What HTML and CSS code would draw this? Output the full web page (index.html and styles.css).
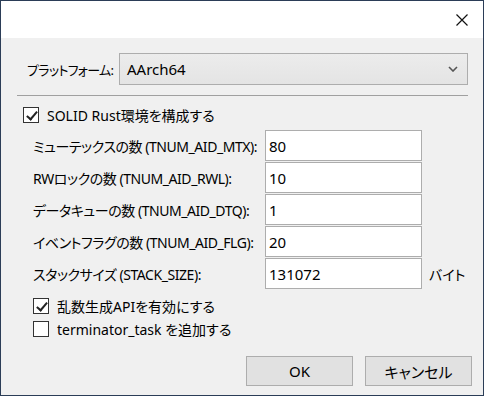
FILE: index.html
```html
<!DOCTYPE html>
<html>
<head>
<meta name="viewport" content="width=device-width, initial-scale=1">
<title>SOLID Rust</title>
<link rel="stylesheet" href="styles.css">
</head>
<body>

<div class="window">
  <div class="titlebar">
    <span class="closeBtn">
      <svg width="12" height="12" viewBox="0 0 12 12"><path d="M0.5 0.5 L11.5 11.5 M11.5 0.5 L0.5 11.5" stroke="#111" stroke-width="1.2" fill="none"/></svg>
    </span>
  </div>

  <div class="content">
    <div class="platformRow">
      <span class="platformLabel">プラットフォーム:</span>
      <div class="select">
        <span>AArch64</span>
        <svg width="10" height="6" viewBox="0 0 10 6"><path d="M1 1 L5 5 L9 1" stroke="#555" stroke-width="1.6" fill="none"/></svg>
      </div>
    </div>

    <div class="sep"></div>

    <label class="check mainCheck">
      <span class="box checked"></span>
      <span>SOLID Rust環境を構成する</span>
    </label>

    <div class="fields">
      <span class="fieldLabel">ミューテックスの数 (TNUM_AID_MTX):</span>
      <div class="input">80</div>
      <span></span>

      <span class="fieldLabel">RWロックの数 (TNUM_AID_RWL):</span>
      <div class="input">10</div>
      <span></span>

      <span class="fieldLabel">データキューの数 (TNUM_AID_DTQ):</span>
      <div class="input">1</div>
      <span></span>

      <span class="fieldLabel">イベントフラグの数 (TNUM_AID_FLG):</span>
      <div class="input">20</div>
      <span></span>

      <span class="fieldLabel">スタックサイズ (STACK_SIZE):</span>
      <div class="input">131072</div>
      <span class="unit">バイト</span>
    </div>

    <div class="subChecks">
      <label class="check">
        <span class="box checked"></span>
        <span>乱数生成APIを有効にする</span>
      </label>
      <label class="check">
        <span class="box"></span>
        <span>terminator_task を追加する</span>
      </label>
    </div>
  </div>

  <div class="buttons">
    <span class="btn">OK</span>
    <span class="btn">キャンセル</span>
  </div>
</div>

</body>
</html>
```

FILE: styles.css
```css
* {
  box-sizing: border-box;
}

body {
  margin: 0;
  font-family: "Noto Sans", "Noto Sans CJK JP", sans-serif;
  font-feature-settings: "palt" 1;
  font-size: 14px;
  color: #000;
  white-space: nowrap;
}

/* dialog frame */
.window {
  width: 484px;
  height: 396px;
  border: 1px solid #2b3d57;
  background: #f0f0f0;
  display: flex;
  flex-direction: column;
  overflow: hidden;
}

.titlebar {
  height: 37px;
  flex-shrink: 0;
  background: #fff;
  display: flex;
  justify-content: flex-end;
  align-items: center;
}

.closeBtn {
  display: flex;
  padding: 0 15px 0 0;
  margin-top: 1px;
}

.content {
  padding: 15px 15px 0 16px;
}

/* platform select */
.platformRow {
  display: flex;
  align-items: center;
}

.platformLabel {
  width: 102px;
  flex-shrink: 0;
  padding-left: 10px;
  font-size: 13px;
  letter-spacing: -0.7px;
}

.select {
  flex: 1;
  height: 32px;
  border: 1px solid #adadad;
  background: linear-gradient(#ececec, #e4e4e4);
  display: flex;
  align-items: center;
  justify-content: space-between;
  padding: 0 9px 0 7px;
  font-size: 15px;
}

.sep {
  height: 1px;
  background: #a0a0a0;
  margin-top: 10px;
}

/* checkboxes */
.check {
  display: flex;
  align-items: center;
  gap: 8px;
  height: 16px;
}

.box {
  width: 16px;
  height: 16px;
  flex-shrink: 0;
  border: 1px solid #333;
  background: #fff;
  position: relative;
}

.box.checked::before {
  content: '';
  position: absolute;
  border-color: #222;
  border-style: solid;
  border-width: 0 2.5px 2.5px 0;
  top: 1px;
  left: 4.5px;
  transform: rotate(40deg);
  height: 9px;
  width: 4px;
}

.mainCheck {
  margin: 11px 0 0 6px;
}

/* numeric fields */
.fields {
  display: grid;
  grid-template-columns: 232px 157px auto;
  grid-auto-rows: 32px;
  align-items: center;
  margin: 7px 0 0 16px;
}

.fieldLabel {
  letter-spacing: -0.45px;
}

.unit {
  padding-left: 7px;
}

.input {
  height: 31px;
  align-self: start;
  background: #fff;
  border: 1px solid #adadad;
  display: flex;
  align-items: center;
  padding-left: 3px;
  font-size: 15px;
}

.subChecks {
  display: flex;
  flex-direction: column;
  gap: 7px;
  margin: 8px 0 0 16px;
}

/* bottom buttons */
.buttons {
  display: flex;
  justify-content: flex-end;
  gap: 12px;
  padding: 19px 11px 0 0;
}

.btn {
  width: 107px;
  height: 30px;
  border: 1px solid #adadad;
  background: #e1e1e1;
  display: flex;
  align-items: center;
  justify-content: center;
  font-size: 15px;
}
```
